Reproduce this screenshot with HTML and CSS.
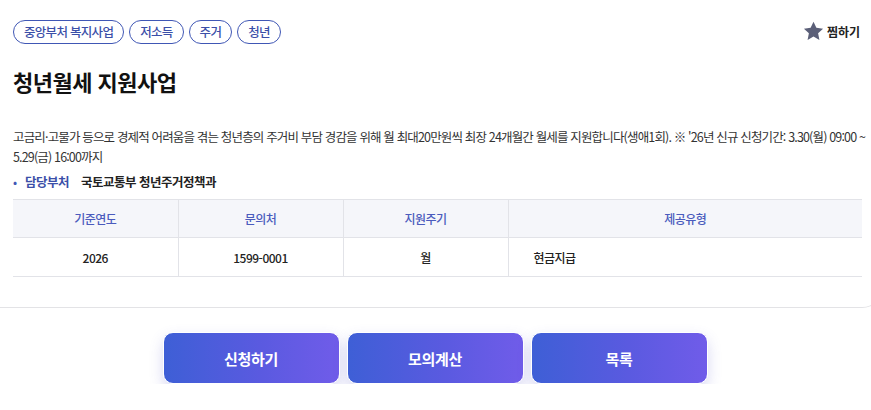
FILE: index.html
```html
<!DOCTYPE html>
<html lang="ko">
<head>
<meta charset="utf-8">
<link rel="stylesheet" href="styles.css">
</head>
<body>
<div class="card">
  <div class="top">
    <div class="tags">
      <span class="tag">중앙부처 복지사업</span>
      <span class="tag">저소득</span>
      <span class="tag">주거</span>
      <span class="tag">청년</span>
    </div>
    <button class="fav">
      <svg width="21" height="20" viewBox="0 0 24 23"><path d="M12 0.8l3.3 7.1 7.7 0.9-5.7 5.3 1.5 7.7L12 17.9l-6.8 3.9 1.5-7.7L1 8.8l7.7-0.9z" fill="#5b5f78"/></svg>
      <span>찜하기</span>
    </button>
  </div>
  <h1 class="title">청년월세 지원사업</h1>
  <p class="desc">고금리·고물가 등으로 경제적 어려움을 겪는 청년층의 주거비 부담 경감을 위해 월 최대20만원씩 최장 24개월간 월세를 지원합니다(생애1회). ※ '26년 신규 신청기간: 3.30(월) 09:00 ~ 5.29(금) 16:00까지</p>
  <div class="dept"><span class="dot">•</span><span class="dept-label">담당부처</span><span class="dept-value">국토교통부 청년주거정책과</span></div>
  <table class="info">
    <thead>
      <tr><th class="c1">기준연도</th><th class="c2">문의처</th><th class="c3">지원주기</th><th class="c4">제공유형</th></tr>
    </thead>
    <tbody>
      <tr><td class="center">2026</td><td class="center">1599-0001</td><td class="center">월</td><td class="left">현금지급</td></tr>
    </tbody>
  </table>
</div>
<div class="actions">
  <button class="btn">신청하기</button>
  <button class="btn">모의계산</button>
  <button class="btn">목록</button>
</div>
</body>
</html>
```
FILE: styles.css
```css
* { box-sizing: border-box; }
html, body { margin: 0; padding: 0; background: #fff; overflow-x: hidden; }
body {
  font-family: "Noto Sans CJK KR", "Noto Sans", sans-serif;
  color: #222;
  width: 871px;
}
.card {
  width: 885px;
  margin-left: -1px;
  padding: 20px 23px 30px 14px;
  border-bottom: 1px solid #e3e3e6;
  border-right: 1px solid #e3e3e6;
  border-bottom-right-radius: 22px;
}
.top {
  display: flex;
  justify-content: space-between;
  align-items: flex-start;
}
.tags { display: flex; gap: 5px; }
.tag {
  height: 24px;
  padding: 0 10px;
  border: 1.5px solid #4057b5;
  border-radius: 12px;
  color: #3b4fa8;
  font-size: 12.5px;
  font-weight: 500;
  line-height: 21px;
  letter-spacing: -0.7px;
}
.fav {
  display: flex;
  align-items: center;
  gap: 3px;
  border: none;
  background: none;
  padding: 0;
  margin-top: 1px;
  margin-right: 0;
  font-family: inherit;
  font-size: 12px;
  font-weight: 700;
  color: #222;
  cursor: pointer;
}
.title {
  margin: 22px 0 0;
  font-size: 22px;
  font-weight: 700;
  line-height: 30px;
  color: #111;
  letter-spacing: -0.5px;
}
.desc {
  margin: 31px 0 0;
  font-size: 12.5px;
  line-height: 20px;
  color: #333;
  letter-spacing: -0.84px;
  width: 856px;
}
.dept {
  display: flex;
  align-items: center;
  margin-top: 5px;
  font-size: 12.5px;
  line-height: 20px;
  letter-spacing: -0.5px;
}
.dot { color: #4057b5; font-size: 12px; width: 12px; }
.dept-label { color: #3b4fa8; font-weight: 700; margin-right: 12px; }
.dept-value { color: #222; font-weight: 700; }
.info {
  margin-top: 7px;
  width: 849px;
  border-collapse: collapse;
  font-size: 12px;
  letter-spacing: -0.5px;
}
.info th, .info td {
  border: 1px solid #e2e3e8;
  border-left: none;
}
.info th + th, .info td + td { border-left: 1px solid #e2e3e8; }
.info th:last-child, .info td:last-child { border-right: none; }
.info th {
  height: 38px;
  background: #f5f6fa;
  color: #4a5bbd;
  font-weight: 500;
}
.info td {
  height: 39px;
  color: #222;
  font-weight: 500;
}
.c1, .c2, .c3 { width: 165px; }
.center { text-align: center; }
.left { text-align: left; padding-left: 25px; }
.actions {
  display: flex;
  justify-content: center;
  gap: 7px;
  padding-top: 24px;
  padding-right: 1px;
}
.btn {
  flex: none;
  width: 177px;
  height: 52px;
  border: 1.5px solid #fff;
  border-radius: 10px;
  background: linear-gradient(90deg, #3e5fd6 0%, #5a5ae0 55%, #705ce9 100%);
  color: #fff;
  font-family: inherit;
  font-size: 15px;
  font-weight: 700;
  letter-spacing: -0.3px;
  box-shadow: 0 6px 14px rgba(80, 80, 200, 0.22);
  cursor: pointer;
}
```
